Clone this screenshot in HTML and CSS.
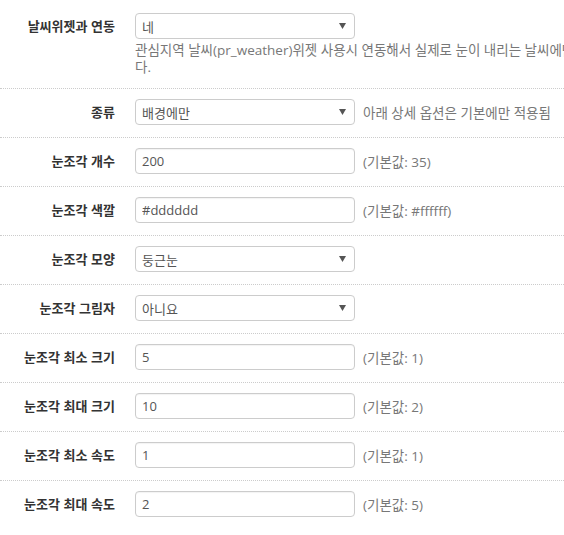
FILE: index.html
```html
<!DOCTYPE html>
<html lang="ko">
<head>
<meta charset="utf-8">
<link rel="stylesheet" href="styles.css">
</head>
<body>
<div class="form">
  <div class="row first">
    <div class="label">날씨위젯과 연동</div>
    <div class="field">
      <div class="line">
        <div class="select"><span>네</span><svg class="arrow" width="7" height="6" viewBox="0 0 7 6"><path d="M0 0H7L3.5 6Z" fill="#555"/></svg></div>
      </div>
      <p class="help">관심지역 날씨(pr_weather)위젯 사용시 연동해서 실제로 눈이 내리는 날씨에만 눈이 내립니다.</p>
    </div>
  </div>
  <div class="row">
    <div class="label">종류</div>
    <div class="field line">
      <div class="select"><span>배경에만</span><svg class="arrow" width="7" height="6" viewBox="0 0 7 6"><path d="M0 0H7L3.5 6Z" fill="#555"/></svg></div>
      <span class="hint">아래 상세 옵션은 기본에만 적용됨</span>
    </div>
  </div>
  <div class="row">
    <div class="label">눈조각 개수</div>
    <div class="field line">
      <input class="input" type="text" value="200">
      <span class="hint">(기본값: 35)</span>
    </div>
  </div>
  <div class="row">
    <div class="label">눈조각 색깔</div>
    <div class="field line">
      <input class="input" type="text" value="#dddddd">
      <span class="hint">(기본값: #ffffff)</span>
    </div>
  </div>
  <div class="row">
    <div class="label">눈조각 모양</div>
    <div class="field line">
      <div class="select"><span>둥근눈</span><svg class="arrow" width="7" height="6" viewBox="0 0 7 6"><path d="M0 0H7L3.5 6Z" fill="#555"/></svg></div>
    </div>
  </div>
  <div class="row">
    <div class="label">눈조각 그림자</div>
    <div class="field line">
      <div class="select"><span>아니요</span><svg class="arrow" width="7" height="6" viewBox="0 0 7 6"><path d="M0 0H7L3.5 6Z" fill="#555"/></svg></div>
    </div>
  </div>
  <div class="row">
    <div class="label">눈조각 최소 크기</div>
    <div class="field line">
      <input class="input" type="text" value="5">
      <span class="hint">(기본값: 1)</span>
    </div>
  </div>
  <div class="row">
    <div class="label">눈조각 최대 크기</div>
    <div class="field line">
      <input class="input" type="text" value="10">
      <span class="hint">(기본값: 2)</span>
    </div>
  </div>
  <div class="row">
    <div class="label">눈조각 최소 속도</div>
    <div class="field line">
      <input class="input" type="text" value="1">
      <span class="hint">(기본값: 1)</span>
    </div>
  </div>
  <div class="row last">
    <div class="label">눈조각 최대 속도</div>
    <div class="field line">
      <input class="input" type="text" value="2">
      <span class="hint">(기본값: 5)</span>
    </div>
  </div>
</div>
</body>
</html>
```

FILE: styles.css
```css
html, body {
  margin: 0;
  padding: 0;
  overflow: hidden;
  background: #fff;
}
body {
  font-family: "Open Sans", "Noto Sans CJK KR", sans-serif;
  font-size: 13px;
  color: #333;
}
.form {
  width: 660px;
  padding-top: 3px;
}
.row {
  display: flex;
  align-items: flex-start;
  padding: 10px 0 12px;
  border-bottom: 1px dotted #ccc;
}
.row.last {
  border-bottom: none;
}
.label {
  width: 135px;
  flex: none;
  padding-right: 20px;
  box-sizing: border-box;
  text-align: right;
  font-weight: bold;
  font-family: "Noto Sans CJK KR", sans-serif;
  font-size: 13px;
  line-height: 26px;
  height: 26px;
  white-space: nowrap;
}
.field {
  flex: 1;
  min-width: 0;
}
.line {
  display: flex;
  align-items: center;
  gap: 8px;
}
.select, .input {
  width: 220px;
  height: 26px;
  box-sizing: border-box;
  border: 1px solid #ccc;
  border-radius: 4px;
  background: #fff;
  font-family: "Open Sans", "Noto Sans CJK KR", sans-serif;
  font-size: 13px;
  color: #555;
  flex: none;
}
.select {
  display: flex;
  align-items: center;
  justify-content: space-between;
  padding: 0 8px 0 6px;
}
.input {
  padding: 0 6px;
  outline: none;
  box-shadow: inset 0 1px 1px rgba(0,0,0,0.05);
}
.hint {
  color: #777;
  font-size: 13.5px;
  white-space: nowrap;
}
.help {
  margin: 3px 0 0;
  color: #777;
  font-size: 13.5px;
  line-height: 17px;
  width: 516px;
}
```
